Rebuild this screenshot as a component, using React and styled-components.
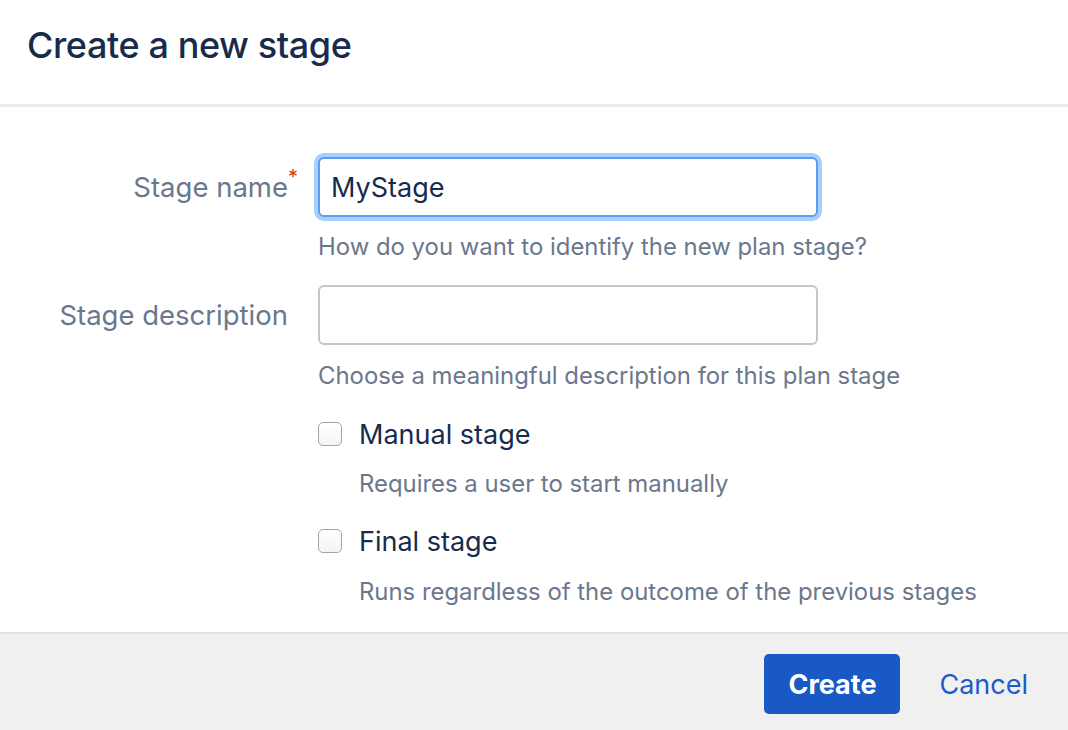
import styled, { createGlobalStyle } from "styled-components";

const GlobalStyle = createGlobalStyle`
	html, body {
		margin: 0;
		padding: 0;
		background: #ffffff;
	}
	body {
		font-family: Inter, "Noto Sans", "Liberation Sans", sans-serif;
		color: #172b4d;
		-webkit-font-smoothing: antialiased;
	}
`;

const Dialog = styled.div`
	width: 1068px;
	height: 730px;
	display: flex;
	flex-direction: column;
	background: #ffffff;
	overflow: hidden;
`;

const Header = styled.header`
	height: 104px;
	display: flex;
	align-items: center;
	padding: 0 27px;
	border-bottom: 3px solid #ebecf0;
	box-sizing: content-box;
`;

const Title = styled.h2`
	margin: 0 0 14px;
	font-size: 36px;
	font-weight: 500;
	letter-spacing: -0.4px;
	color: #172b4d;
`;

const Body = styled.div`
	flex: 1;
	padding: 50px 0 0;
`;

const Row = styled.div`
	display: grid;
	grid-template-columns: 288px 500px;
	column-gap: 30px;
	margin-top: ${(p) => p.$top || 0}px;
`;

const Label = styled.label`
	position: relative;
	justify-self: end;
	line-height: 60px;
	font-size: 27.5px;
	color: #6b778c;
`;

const Required = styled.span`
	position: absolute;
	left: 100%;
	top: -10px;
	color: #de350b;
	font-size: 20px;
`;

const TextInput = styled.input`
	box-sizing: border-box;
	width: 500px;
	height: 60px;
	padding: 0 11px;
	font-family: inherit;
	font-size: 27px;
	color: #172b4d;
	background: #ffffff;
	border: 2px solid ${(p) => (p.$focused ? "#5c9ef3" : "#c1c7d0")};
	border-radius: 6px;
	box-shadow: ${(p) => (p.$focused ? "0 0 0 4px #a9cffb" : "none")};
	outline: none;
`;

const Help = styled.div`
	grid-column: 2;
	margin-top: ${(p) => p.$top || 0}px;
	padding-left: ${(p) => (p.$indent ? 41 : 0)}px;
	line-height: 36px;
	font-size: 23.9px;
	color: #6b778c;
	white-space: nowrap;
`;

const CheckRow = styled.label`
	grid-column: 2;
	display: flex;
	align-items: center;
	gap: 17px;
	height: 40px;
	font-size: 27px;
	color: #172b4d;
	white-space: nowrap;
`;

const Box = styled.span`
	box-sizing: border-box;
	width: 24px;
	height: 24px;
	border: 1.5px solid #a5a5a5;
	border-radius: 5px;
	background: linear-gradient(#ffffff, #f4f4f4);
`;

const Footer = styled.footer`
	height: 98px;
	border-top: 2px solid #dfe1e6;
	background: #f0f0f0;
	display: flex;
	align-items: center;
	justify-content: flex-end;
	padding: 4px 40px 0 0;
	box-sizing: border-box;
	gap: 39px;
`;

const PrimaryButton = styled.button`
	width: 136px;
	height: 60px;
	border: none;
	border-radius: 5px;
	background: #1859c6;
	color: #ffffff;
	font-family: inherit;
	font-size: 27px;
	font-weight: 700;
	cursor: pointer;
`;

const LinkButton = styled.button`
	border: none;
	background: none;
	padding: 0;
	font-family: inherit;
	font-size: 27px;
	color: #1b5cc8;
	cursor: pointer;
`;

const App = () => {
	return (
		<Dialog>
			<GlobalStyle />
			<Header>
				<Title>Create a new stage</Title>
			</Header>
			<Body>
				<Row>
					<Label>
						Stage name<Required>*</Required>
					</Label>
					<TextInput $focused defaultValue="MyStage" />
					<Help $top={12}>How do you want to identify the new plan stage?</Help>
				</Row>
				<Row $top={20}>
					<Label>Stage description</Label>
					<TextInput />
					<Help $top={13}>Choose a meaningful description for this plan stage</Help>
				</Row>
				<Row $top={20}>
					<CheckRow>
						<Box />
						Manual stage
					</CheckRow>
					<Help $indent $top={12}>
						Requires a user to start manually
					</Help>
				</Row>
				<Row $top={19}>
					<CheckRow>
						<Box />
						Final stage
					</CheckRow>
					<Help $indent $top={13}>
						Runs regardless of the outcome of the previous stages
					</Help>
				</Row>
			</Body>
			<Footer>
				<PrimaryButton>Create</PrimaryButton>
				<LinkButton>Cancel</LinkButton>
			</Footer>
		</Dialog>
	);
};

export default App;
